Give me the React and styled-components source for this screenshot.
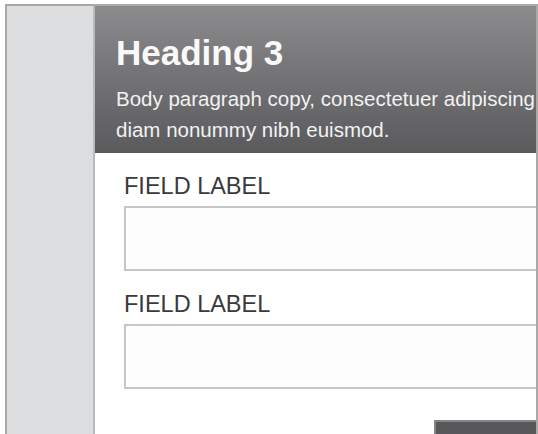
import React from "react";
import styled, { createGlobalStyle } from "styled-components";

const GlobalStyle = createGlobalStyle`
  html, body {
    margin: 0;
    padding: 0;
    background: #ffffff;
    overflow: hidden;
  }
  body {
    font-family: "Liberation Sans", Arial, Helvetica, sans-serif;
  }
  * { box-sizing: border-box; }
`;

const Frame = styled.div`
  margin: 4px 0 0 5px;
  width: 533px;
  height: 520px;
  border: 2px solid #a9a9a9;
  border-bottom: none;
  display: grid;
  grid-template-columns: 88px 441px;
  overflow: hidden;
`;

const Sidebar = styled.aside`
  background: #dcdddf;
  border-right: 2px solid #b9babc;
`;

const Main = styled.main`
  overflow: hidden;
  background: #ffffff;
`;

const Panel = styled.div`
  width: 560px;
`;

const Header = styled.header`
  background: linear-gradient(to bottom, #8b8b8e 0%, #5a5a5c 100%);
  padding: 27px 21px 8px;
  color: #f7f7f7;
`;

const Heading = styled.h3`
  margin: 0;
  font-size: 35px;
  line-height: 40px;
  font-weight: 700;
  color: #f9f9f9;
`;

const Lead = styled.p`
  margin: 10px 0 0;
  font-size: 20.5px;
  line-height: 31px;
  color: #f2f2f2;
`;

const Form = styled.form`
  padding: 19px 29px 0;
  display: flex;
  flex-direction: column;
`;

const Field = styled.label`
  display: flex;
  flex-direction: column;
  gap: 6px;
  margin-bottom: ${(p) => p.$spacing}px;
`;

const FieldLabel = styled.span`
  font-size: 23.5px;
  line-height: 28px;
  color: #3a3a3a;
`;

const Input = styled.input`
  display: block;
  width: 100%;
  height: 65px;
  border: 2px solid #c6c6c6;
  background: #fdfdfd;
  padding: 0 12px;
  font: inherit;
  outline: none;
`;

const Actions = styled.div`
  display: flex;
  justify-content: flex-end;
  margin-top: 12px;
`;

const Submit = styled.button`
  width: 192px;
  height: 46px;
  background: #58585a;
  border: 2px solid #858587;
  cursor: pointer;
`;

export default function App() {
  return (
    <>
      <GlobalStyle />
      <Frame>
        <Sidebar />
        <Main>
          <Panel>
            <Header>
              <Heading>Heading 3</Heading>
              <Lead>
                Body paragraph copy, consectetuer adipiscing elit, sed diam
                nonummy nibh euismod.
              </Lead>
            </Header>
            <Form onSubmit={(e) => e.preventDefault()}>
              <Field $spacing={19}>
                <FieldLabel>FIELD LABEL</FieldLabel>
                <Input type="text" />
              </Field>
              <Field $spacing={19}>
                <FieldLabel>FIELD LABEL</FieldLabel>
                <Input type="text" />
              </Field>
              <Actions>
                <Submit type="submit" aria-label="Submit" />
              </Actions>
            </Form>
          </Panel>
        </Main>
      </Frame>
    </>
  );
}
